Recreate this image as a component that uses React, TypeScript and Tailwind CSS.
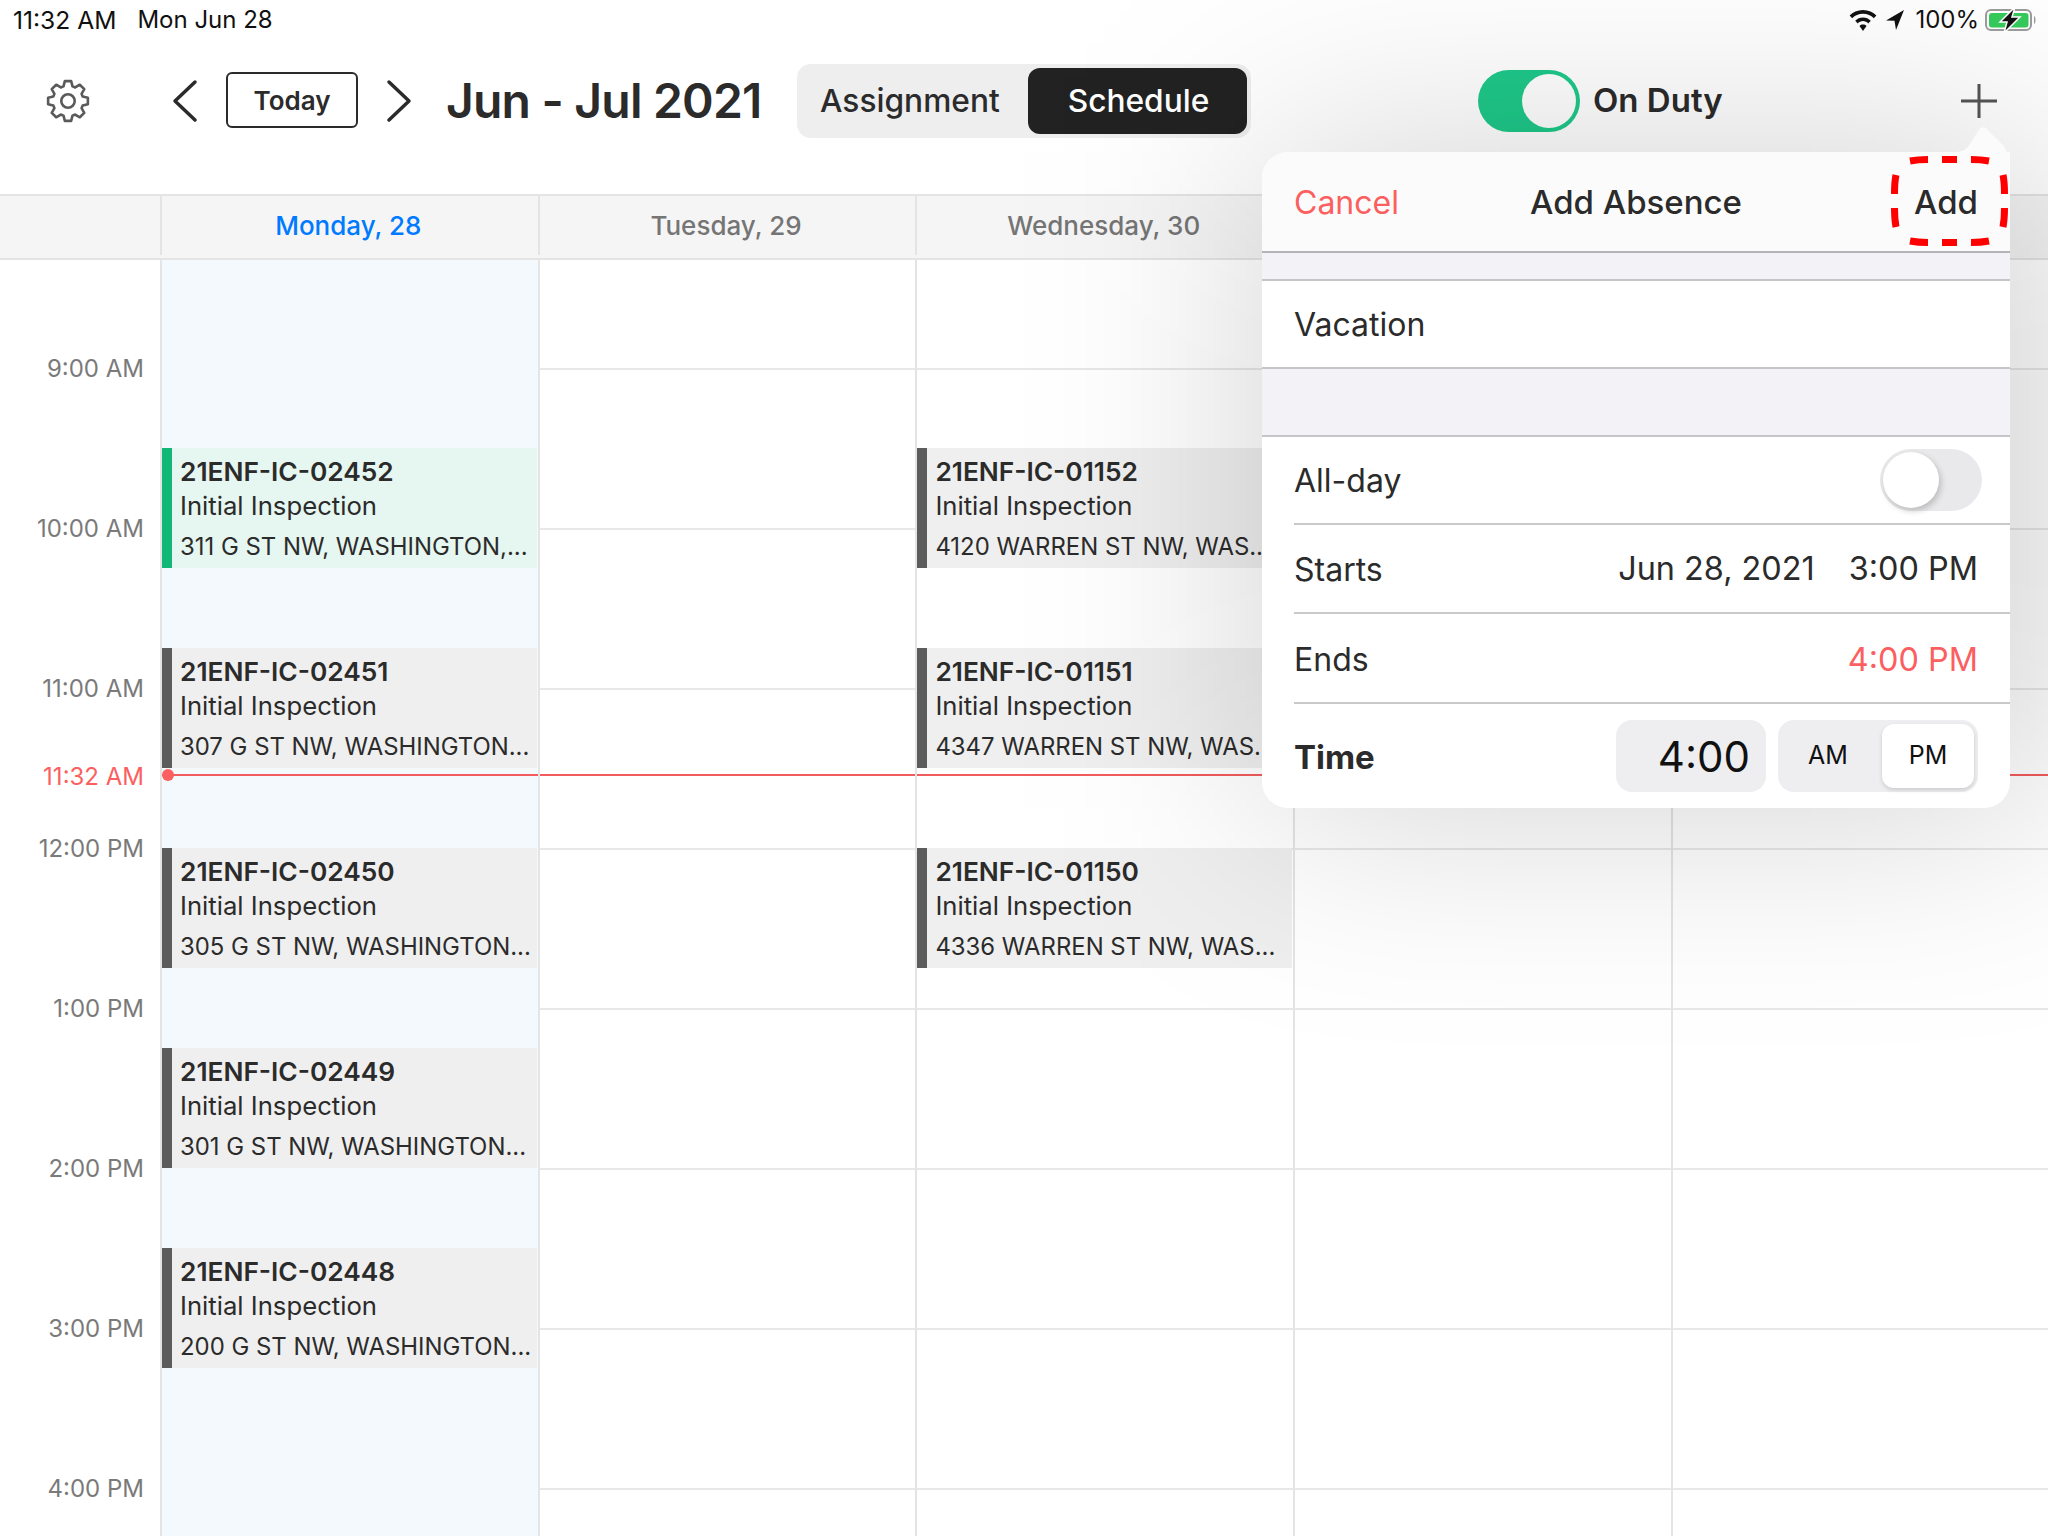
import React from "react";

const hours = ["9:00 AM", "10:00 AM", "11:00 AM", "12:00 PM", "1:00 PM", "2:00 PM", "3:00 PM", "4:00 PM"];

const monday = [
  { id: "21ENF-IC-02452", addr: "311 G ST NW, WASHINGTON,...", active: true },
  { id: "21ENF-IC-02451", addr: "307 G ST NW, WASHINGTON..." },
  { id: "21ENF-IC-02450", addr: "305 G ST NW, WASHINGTON..." },
  { id: "21ENF-IC-02449", addr: "301 G ST NW, WASHINGTON..." },
  { id: "21ENF-IC-02448", addr: "200 G ST NW, WASHINGTON..." },
];

const wednesday = [
  { id: "21ENF-IC-01152", addr: "4120 WARREN ST NW, WAS..." },
  { id: "21ENF-IC-01151", addr: "4347 WARREN ST NW, WAS..." },
  { id: "21ENF-IC-01150", addr: "4336 WARREN ST NW, WAS..." },
];

type Job = { id: string; addr: string; active?: boolean };

// 8 toothed gear outline, points worked out round the centre
const gearPath = Array.from({ length: 8 })
  .map((_, i) => {
    const a = (i * Math.PI) / 4 - Math.PI / 2;
    const pt = (r: number, d: number) => {
      const t = a + (d * Math.PI) / 180;
      return `${(24 + r * Math.cos(t)).toFixed(2)} ${(24 + r * Math.sin(t)).toFixed(2)}`;
    };
    return `${i === 0 ? "M" : "L"}${pt(16, -17)} L${pt(21, -9)} L${pt(21, 9)} L${pt(16, 17)}`;
  })
  .join(" ")
  .concat(" Z");

function EventCard({ job }: { job: Job }) {
  return (
    <div
      className={`mr-[1px] flex h-[120px] border-l-[10px] pl-[8px] ${
        job.active ? "border-[#12b777] bg-[#e6f6f0]" : "border-[#5c5c5c] bg-[#efefef]"
      }`}
    >
      <div className="min-w-0 text-[#2b2b2b]">
        <div className="mt-[8px] text-[26.3px] leading-[32px] font-semibold whitespace-nowrap">{job.id}</div>
        <div className="mt-[2px] text-[25.7px] leading-[32px] whitespace-nowrap">Initial Inspection</div>
        <div className="mt-[10px] text-[23.9px] leading-[30px] whitespace-nowrap">{job.addr}</div>
      </div>
    </div>
  );
}

function DayColumn({ jobs = [], today = false }: { jobs?: Job[]; today?: boolean }) {
  return (
    <div
      className={`relative h-[1276px] overflow-hidden border-l-2 border-[#e4e4e4] pt-[188px] ${
        today
          ? "bg-[#f4f9fd]"
          : "bg-[linear-gradient(to_bottom,#e8e8e8_2px,transparent_2px)] bg-[size:100%_160px] bg-[position:0_108px]"
      }`}
    >
      <div className="flex flex-col gap-[80px]">
        {jobs.map((job) => (
          <EventCard key={job.id} job={job} />
        ))}
      </div>
      <div className="absolute top-[514px] right-0 left-0 h-[2px] bg-[#f25c5c]" />
      {today && <div className="absolute top-[509px] left-0 h-[12px] w-[12px] rounded-full bg-[#fb5f5f]" />}
    </div>
  );
}

function AddAbsence() {
  return (
    <>
      {/* soft dim behind the popover */}
      <div className="absolute top-[152px] left-[1262px] h-[656px] w-[790px] bg-black/[0.18] blur-[115px]" />
      <div className="absolute top-[152px] left-[1262px] w-[748px] rounded-[26px] bg-white text-[32px] text-[#2b2b2b]">
        <svg className="absolute -top-[26px] right-0" width="60" height="60" viewBox="0 0 60 60">
          <path d="M0 26 H5 C12 26 16 24 20 18 L28 5 C31 0 36 0 39 5 L52 18 C57 23 60 30 60 60 H0 Z" fill="#fbfbfb" />
        </svg>
        <div className="relative flex h-[101px] items-center justify-between rounded-tl-[26px] border-b-2 border-[#b4b4b8] bg-[#fbfbfb] px-[32px] pt-[2px]">
          <span className="w-[200px] text-[#fb5f5f]">Cancel</span>
          <span className="text-[33px] font-medium">Add Absence</span>
          <span className="w-[200px] text-right text-[33px] font-medium">Add</span>
        </div>
        <div className="h-[28px] border-b-2 border-[#c6c6ca] bg-[#f2f2f7]" />
        <div className="flex h-[88px] items-center border-b-2 border-[#c6c6ca] pt-[2px] pl-[32px]">Vacation</div>
        <div className="h-[68px] border-b-2 border-[#c6c6ca] bg-[#f2f2f7]" />
        <div className="ml-[32px]">
          <div className="flex h-[88px] items-center justify-between border-b-2 border-[#c9c9cc] pr-[28px]">
            <span className="pt-[2px]">All-day</span>
            <div className="flex h-[62px] w-[102px] items-center rounded-full bg-[#e9e9eb] pl-[3px]">
              <div className="h-[56px] w-[56px] rounded-full bg-white shadow-[2px_3px_6px_rgba(0,0,0,0.2)]" />
            </div>
          </div>
          <div className="flex h-[89px] items-center border-b-2 border-[#c9c9cc] pt-[2px] pr-[32px]">
            <span>Starts</span>
            <span className="ml-auto text-[32.4px]">Jun 28, 2021</span>
            <span className="ml-[34px] text-[32.4px]">3:00 PM</span>
          </div>
          <div className="flex h-[90px] items-center justify-between border-b-2 border-[#c9c9cc] pt-[4px] pr-[32px]">
            <span>Ends</span>
            <span className="text-[32.4px] text-[#fb5f5f]">4:00 PM</span>
          </div>
          <div className="flex h-[104px] items-center pr-[32px]">
            <span className="pt-[3px] text-[33px] font-bold">Time</span>
            <div className="ml-auto flex h-[72px] w-[150px] items-center justify-end rounded-[16px] bg-[#eeeef0] pr-[16px] text-[42px] text-[#111111]">
              4:00
            </div>
            <div className="ml-[12px] flex h-[72px] w-[200px] items-center rounded-[16px] bg-[#eeeef0] py-[4px] pr-[4px] text-[25px] text-[#111111]">
              <span className="flex-1 pr-[4px] text-center">AM</span>
              <span className="flex h-[64px] w-[92px] items-center justify-center rounded-[12px] bg-white shadow-[0_2px_4px_rgba(0,0,0,0.15)]">
                PM
              </span>
            </div>
          </div>
        </div>
        {/* red marker round the Add button */}
        <svg className="absolute top-0 -right-[2px]" width="124" height="98" viewBox="0 0 124 98" fill="none" stroke="#ff0000" strokeWidth="7">
          <path d="M22 9 Q30 7.500 40 7.500 M54 7.500 H69 M83 7.500 Q93 7.500 101 9" />
          <path d="M22 89 Q30 90.500 40 90.500 M54 90.500 H69 M83 90.500 Q93 90.500 101 89" />
          <path d="M8 23 Q6.500 30 6.500 42 M6.500 56 Q6.500 67 8 75" />
          <path d="M115 23 Q116.500 30 116.500 42 M116.500 56 Q116.500 67 115 75" />
        </svg>
      </div>
    </>
  );
}

export default function App() {
  return (
    <div className="relative h-[1536px] w-[2048px] overflow-hidden bg-white font-['Inter',sans-serif]">
      <div className="flex h-[36px] items-center pt-[4px] pr-[9px] pl-[13px] text-[24px] text-[#111111]">
        <span className="text-[24.6px]">11:32 AM</span>
        <span className="ml-[21px]">Mon Jun 28</span>
        <div className="relative z-10 ml-auto flex items-center">
          <svg width="30" height="24" viewBox="0 0 30 24" fill="#111">
            <path d="M15 2C20.500 2 25.200 4.200 28.400 7.500L25.800 10.200C23.100 7.400 19.300 5.700 15 5.700S6.900 7.400 4.200 10.200L1.600 7.500C4.800 4.200 9.500 2 15 2Z" />
            <path d="M15 9.400C18 9.400 20.800 10.600 22.800 12.700L20.200 15.400C18.900 14 17 13.100 15 13.100S11.100 14 9.800 15.400L7.200 12.700C9.200 10.600 12 9.400 15 9.400Z" />
            <path d="M15 16.600C16.400 16.600 17.600 17.100 18.500 18L15 23L11.500 18C12.400 17.100 13.600 16.600 15 16.600Z" />
          </svg>
          <svg className="ml-[7px]" width="20" height="22" viewBox="0 0 20 22" fill="#111">
            <path d="M19 1 L1 11.500 L9.500 11.800 L11 21 Z" />
          </svg>
          <span className="ml-[10px]">100%</span>
          <svg className="ml-[6px]" width="54" height="26" viewBox="0 0 54 26" fill="none">
            <rect x="1" y="3" width="45" height="20" rx="5" stroke="#9a9a9a" strokeWidth="2" />
            <rect x="4" y="6" width="39.500" height="14.500" rx="3" fill="#34c759" />
            <path d="M49 9C51 10 51 16 49 17Z" fill="#9a9a9a" />
            <path d="M30 0 L15 15 L22 15 L19 26 L35 10 L27 10 Z" fill="#111" stroke="#fff" strokeWidth="1.500" />
          </svg>
        </div>
      </div>

      <div className="flex h-[158px] pb-[28px]">
        <div className="flex flex-1 items-center">
          <svg className="ml-[45px]" width="46" height="46" viewBox="0 0 48 48" fill="none" stroke="#5a5a5a" strokeWidth="2.700" strokeLinejoin="round">
            <path d={gearPath} />
            <circle cx="24" cy="24" r="7" />
          </svg>
          <svg className="ml-[80px]" width="28" height="44" viewBox="0 0 28 44" fill="none" stroke="#2b2b2b" strokeWidth="3.500" strokeLinecap="round" strokeLinejoin="round">
            <path d="M24 3 L4 22 L24 41" />
          </svg>
          <button className="mb-[2px] ml-[27px] flex h-[56px] w-[132px] items-center justify-center rounded-[6px] border-2 border-[#2b2b2b] text-[26px] font-semibold text-[#2b2b2b]">
            Today
          </button>
          <svg className="ml-[27px]" width="28" height="44" viewBox="0 0 28 44" fill="none" stroke="#2b2b2b" strokeWidth="3.500" strokeLinecap="round" strokeLinejoin="round">
            <path d="M4 3 L24 22 L4 41" />
          </svg>
          <h1 className="ml-[33px] w-[351px] text-[48px] font-semibold tracking-[-0.8px] whitespace-nowrap text-[#2b2b2b]">Jun - Jul 2021</h1>
          <div className="flex h-[74px] w-[454px] items-center rounded-[14px] bg-[#eeeeee] p-[4px] text-[31.7px] font-medium">
            <span className="flex-1 pl-[19px] text-[#2b2b2b]">Assignment</span>
            <span className="flex h-[66px] w-[219px] items-center justify-center rounded-[12px] bg-[#222222] pl-[2px] text-white">Schedule</span>
          </div>
          <div className="ml-[227px] flex h-[62px] w-[102px] items-center justify-end rounded-full bg-[#1fc98a] pr-[4px]">
            <div className="h-[54px] w-[54px] rounded-full bg-white" />
          </div>
          <span className="ml-[13px] text-[33px] font-semibold text-[#2b2b2b]">On Duty</span>
          <svg className="mr-[51px] ml-auto" width="36" height="34" viewBox="0 0 36 34" stroke="#555555" strokeWidth="3">
            <path d="M18 0V34M0 17H36" />
          </svg>
        </div>
      </div>

      <div className="grid h-[66px] grid-cols-[160px_repeat(5,377.7px)] border-y-2 border-[#e4e4e4] bg-[#f5f5f5] pb-[3px] text-[26px] font-medium text-[#757575]">
        <div />
        <div className="flex items-center justify-center border-l-2 border-[#e4e4e4] pr-[3px] text-[#007aff]">Monday, 28</div>
        <div className="flex items-center justify-center border-l-2 border-[#e4e4e4] pr-[3px]">Tuesday, 29</div>
        <div className="flex items-center justify-center border-l-2 border-[#e4e4e4] pr-[3px]">Wednesday, 30</div>
        <div className="border-l-2 border-[#e4e4e4]" />
        <div className="border-l-2 border-[#e4e4e4]" />
      </div>

      <div className="grid grid-cols-[160px_repeat(5,377.7px)]">
        <div className="relative pt-[84px] pr-[16px] text-right text-[24px] text-[#7a7a7a]">
          {hours.map((h) => (
            <div key={h} className="flex h-[160px] items-start leading-[50px]">
              <span className="ml-auto">{h}</span>
            </div>
          ))}
          <span className="absolute top-[492px] right-[16px] leading-[50px] text-[#fb5f5f]">11:32 AM</span>
        </div>
        <DayColumn jobs={monday} today />
        <DayColumn />
        <DayColumn jobs={wednesday} />
        <DayColumn />
        <DayColumn />
      </div>

      <AddAbsence />
    </div>
  );
}
